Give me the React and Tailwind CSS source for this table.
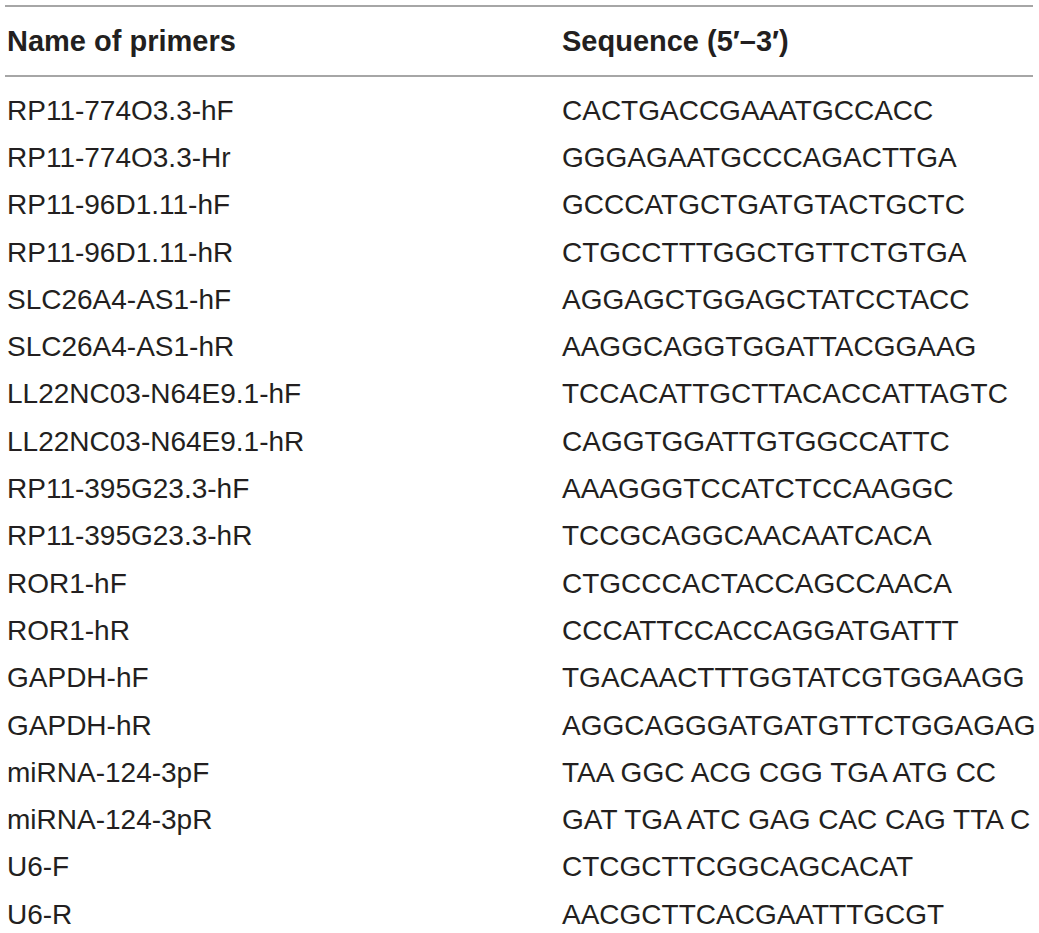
const rows = [
  ["RP11-774O3.3-hF", "CACTGACCGAAATGCCACC"],
  ["RP11-774O3.3-Hr", "GGGAGAATGCCCAGACTTGA"],
  ["RP11-96D1.11-hF", "GCCCATGCTGATGTACTGCTC"],
  ["RP11-96D1.11-hR", "CTGCCTTTGGCTGTTCTGTGA"],
  ["SLC26A4-AS1-hF", "AGGAGCTGGAGCTATCCTACC"],
  ["SLC26A4-AS1-hR", "AAGGCAGGTGGATTACGGAAG"],
  ["LL22NC03-N64E9.1-hF", "TCCACATTGCTTACACCATTAGTC"],
  ["LL22NC03-N64E9.1-hR", "CAGGTGGATTGTGGCCATTC"],
  ["RP11-395G23.3-hF", "AAAGGGTCCATCTCCAAGGC"],
  ["RP11-395G23.3-hR", "TCCGCAGGCAACAATCACA"],
  ["ROR1-hF", "CTGCCCACTACCAGCCAACA"],
  ["ROR1-hR", "CCCATTCCACCAGGATGATTT"],
  ["GAPDH-hF", "TGACAACTTTGGTATCGTGGAAGG"],
  ["GAPDH-hR", "AGGCAGGGATGATGTTCTGGAGAG"],
  ["miRNA-124-3pF", "TAA GGC ACG CGG TGA ATG CC"],
  ["miRNA-124-3pR", "GAT TGA ATC GAG CAC CAG TTA C"],
  ["U6-F", "CTCGCTTCGGCAGCACAT"],
  ["U6-R", "AACGCTTCACGAATTTGCGT"],
];

export default function App() {
  return (
    <div className="h-[933px] overflow-hidden bg-white pt-[5px] pl-[5px] font-['Liberation_Sans',Arial,sans-serif] text-[#231f20]">
      <div className="w-[1028px]">
        <div className="grid h-[72px] grid-cols-[555px_1fr] items-center border-y-2 border-[#a6a6a6] pl-[2px] text-[29px] font-bold leading-[32px]">
          <div>Name of primers</div>
          <div>Sequence (5′–3′)</div>
        </div>
        <div className="pt-[10px] text-[28px] leading-[24px]">
          {rows.map(([name, seq]) => (
            <div key={name} className="grid h-[47.3px] grid-cols-[555px_1fr] items-center pl-[2px]">
              <div>{name}</div>
              <div className="whitespace-nowrap">{seq}</div>
            </div>
          ))}
        </div>
      </div>
    </div>
  );
}
